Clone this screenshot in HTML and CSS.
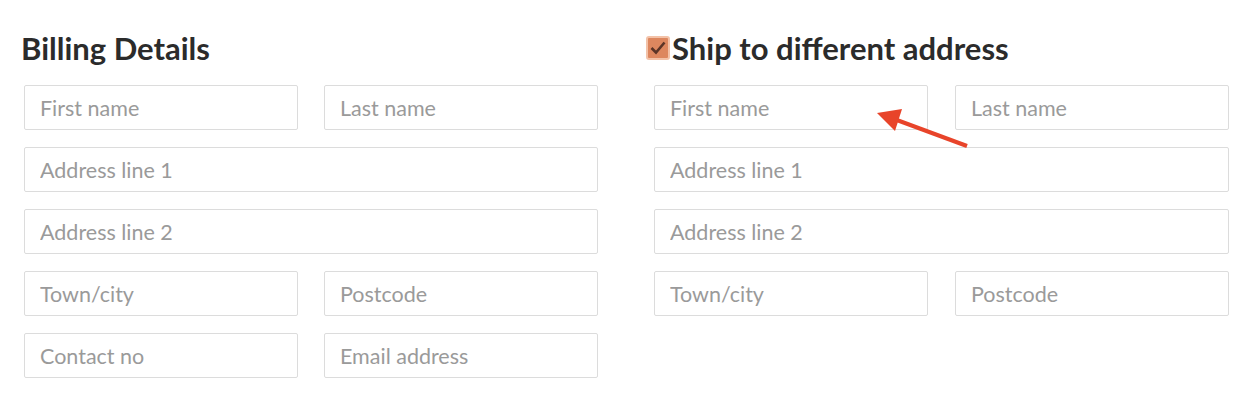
FILE: index.html
```html
<!DOCTYPE html>
<html>
<head>
<meta charset="utf-8">
<link rel="stylesheet" href="styles.css">
</head>
<body>
<div class="page">
  <section class="col">
    <h2 class="title billing">Billing Details</h2>
    <div class="grid">
      <input class="field" placeholder="First name">
      <input class="field" placeholder="Last name">
      <input class="field wide" placeholder="Address line 1">
      <input class="field wide" placeholder="Address line 2">
      <input class="field" placeholder="Town/city">
      <input class="field" placeholder="Postcode">
      <input class="field" placeholder="Contact no">
      <input class="field" placeholder="Email address">
    </div>
  </section>
  <section class="col">
    <h2 class="title ship">
      <span class="check"><svg width="20" height="20" viewBox="0 0 20 20"><path d="M3.5 10 L8 14.5 L16.5 4.5" fill="none" stroke="#5b3427" stroke-width="2.6"/></svg></span>Ship to different address
    </h2>
    <div class="grid grid-ship">
      <input class="field" placeholder="First name">
      <input class="field" placeholder="Last name">
      <input class="field wide" placeholder="Address line 1">
      <input class="field wide" placeholder="Address line 2">
      <input class="field" placeholder="Town/city">
      <input class="field" placeholder="Postcode">
    </div>
  </section>
  <svg class="arrow" width="120" height="60" viewBox="0 0 120 60">
    <line x1="107" y1="46" x2="26" y2="16" stroke="#e8442a" stroke-width="4"/>
    <polygon points="17,13 42,9 35,31" fill="#e8442a"/>
  </svg>
</div>
</body>
</html>
```
FILE: styles.css
```css
* { box-sizing: border-box; }
body {
  margin: 0;
  background: #fff;
  font-family: Lato, "Open Sans", sans-serif;
}
.page {
  position: relative;
  display: flex;
  gap: 56px;
  padding: 0 0 0 24px;
}
.col {
  width: 574px;
}
.title {
  margin: 31px 0 20px;
  height: 34px;
  font-size: 31px;
  line-height: 34px;
  font-weight: 700;
  color: #2b2b2b;
  display: flex;
  align-items: center;
}
.billing { margin-left: -3px; }
.ship { margin-left: -8px; }
.check {
  width: 24px;
  height: 24px;
  border: 2px solid #f3c2a8;
  border-radius: 3px;
  background: #dd875f;
  display: inline-flex;
  align-items: center;
  justify-content: center;
  margin-right: 2px;
  flex: none;
}
.check svg { display: block; }
.grid {
  display: grid;
  grid-template-columns: 274px 274px;
  column-gap: 26px;
  row-gap: 17px;
}
.grid-ship { column-gap: 27px; }
.field {
  height: 45px;
  width: 100%;
  border: 1px solid #dcdcdc;
  border-radius: 2px;
  padding: 0 15px;
  font-family: Lato, sans-serif;
  font-size: 21.5px;
  color: #555;
  background: #fff;
  outline: none;
}
.field::placeholder { color: #9a9a9a; }
.wide { grid-column: 1 / span 2; }
.arrow {
  position: absolute;
  left: 860px;
  top: 100px;
}
```
